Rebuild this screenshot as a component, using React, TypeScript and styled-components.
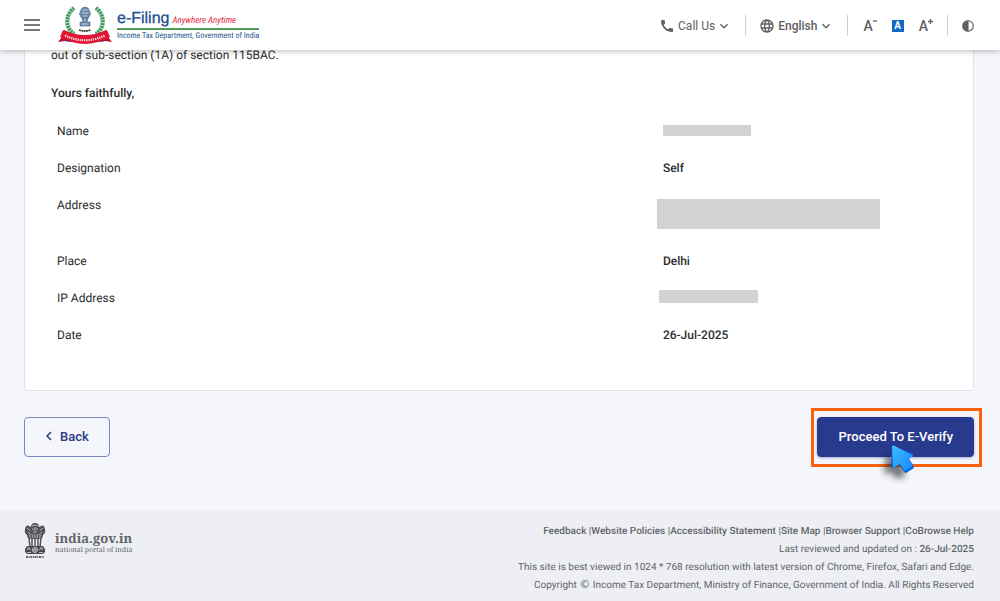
import React from "react";
import styled, { createGlobalStyle, css } from "styled-components";
import { MdCall, MdContrast, MdKeyboardArrowDown, MdKeyboardArrowLeft, MdLanguage } from "react-icons/md";

const GlobalStyle = createGlobalStyle`
  * { box-sizing: border-box; }
  body {
    margin: 0;
    background: #f4f6fb;
    color: #2b2c2e;
    font-family: Roboto, "Liberation Sans", sans-serif;
    font-size: 12px;
    text-rendering: geometricPrecision;
  }
  button { font: inherit; cursor: pointer; }
  p, dl, dd { margin: 0; }
`;

const Header = styled.header`
  position: sticky;
  top: 0;
  z-index: 2;
  display: flex;
  align-items: center;
  justify-content: space-between;
  height: 50px;
  padding: 1px 25px 0 24px;
  background: #fff;
  box-shadow: 0 2px 5px rgba(0, 0, 0, 0.22);
`;

const HeaderStart = styled.div`
  display: flex;
  align-items: center;
  gap: 17px;
`;

const IconButton = styled.button`
  display: flex;
  align-items: center;
  padding: 0;
  border: 0;
  background: none;
  color: #5f6063;
`;

const BrandLink = styled.a`
  display: flex;
  align-items: center;
  gap: 4px;
  text-decoration: none;
`;

const BrandText = styled.span`
  display: flex;
  flex-direction: column;
  font-family: "Roboto Condensed", "Liberation Sans", sans-serif;
  white-space: nowrap;
`;

const BrandTop = styled.span`
  display: flex;
  align-items: baseline;
  gap: 3px;
  height: 20px;
  border-bottom: 2px solid #4f9d5b;
  line-height: 18px;
`;

const BrandName = styled.span`
  color: #1d4f91;
  font-family: "Liberation Sans", sans-serif;
  font-size: 16px;
  -webkit-text-stroke: 0.3px #1d4f91;
`;

const BrandTagline = styled.span`
  color: #e0263c;
  font-size: 9px;
  font-style: italic;
`;

const BrandDepartment = styled.span`
  color: #23598f;
  font-size: 8px;
  line-height: 12px;
`;

const HeaderTools = styled.div`
  display: flex;
  align-items: center;
`;

const Divider = styled.span`
  width: 1px;
  height: 21px;
  margin: 0 13px;
  background: #cfcfd1;
`;

const ToolButton = styled(IconButton)<{ $strong?: boolean }>`
  gap: 3px;
  line-height: 20px;
  font-weight: ${(p) => (p.$strong ? 500 : 400)};
`;

const ToolLabel = styled.span`
  margin-right: -2px;
`;

const TextSizes = styled.div`
  display: flex;
  align-items: center;
  gap: 15px;
  padding: 0 1px 0 2px;
`;

const SizeButton = styled(IconButton)`
  align-items: flex-start;
  font-size: 14px;
  font-weight: 500;
  line-height: 16px;
  svg { margin-top: 1px; }
`;

const SizeDefault = styled(IconButton)`
  justify-content: center;
  width: 12px;
  height: 12px;
  background: #1268c4;
  color: #fff;
  font-size: 10px;
  font-weight: 700;
  line-height: 12px;
`;

const Main = styled.main`
  padding: 0 26px 53px 24px;
`;

const Card = styled.section`
  margin-top: -25px;
  padding: 23px 25px 36px 26px;
  border: 1px solid #e1e3ea;
  border-radius: 3px;
  background: #fff;
`;

const Clause = styled.p`
  line-height: 12px;
`;

const SignOff = styled.p`
  margin: 24px 0 12px;
  font-weight: 500;
  line-height: 16px;
`;

const Details = styled.dl`
  padding-left: 6px;
`;

const DetailRow = styled.div`
  display: grid;
  grid-template-columns: 68% 1fr;
  line-height: 37px;
`;

const DetailValue = styled.dd`
  font-weight: 500;
`;

const redactionSizes = {
  name: css`width: 88px; height: 11px; margin: 12px 0 14px;`,
  address: css`width: 223px; height: 30px; margin: 12px -6px 14px;`,
  ip: css`width: 99px; height: 13px; margin: 10px -4px 14px;`,
};

const Redaction = styled.span<{ $kind: keyof typeof redactionSizes }>`
  display: block;
  background: #d1d3d4;
  ${(p) => redactionSizes[p.$kind]}
`;

const Actions = styled.div`
  display: flex;
  justify-content: space-between;
  margin-top: 26px;
`;

const ActionButton = styled.button<{ $primary?: boolean }>`
  display: flex;
  align-items: center;
  height: 40px;
  gap: 2px;
  padding: ${(p) => (p.$primary ? "0 20px 2px 21px" : "0 20px 2px 15px")};
  border: 1px solid ${(p) => (p.$primary ? "#283a8e" : "#7c87bd")};
  border-radius: 4px;
  background: ${(p) => (p.$primary ? "#283a8e" : "transparent")};
  color: ${(p) => (p.$primary ? "#fff" : "#2c3a85")};
  box-shadow: ${(p) => (p.$primary ? "0 1px 3px rgba(40, 58, 142, 0.4)" : "none")};
  font-size: 13px;
  font-weight: 500;
`;

const Spotlight = styled.div`
  position: relative;
  &::after {
    content: "";
    position: absolute;
    inset: -9px -8px -10px -6px;
    border: 3px solid #f9610b;
    pointer-events: none;
  }
`;

const Pointer = styled.svg`
  position: absolute;
  top: 24px;
  left: 66px;
  z-index: 1;
  overflow: visible;
  pointer-events: none;
`;

const Footer = styled.footer`
  display: flex;
  justify-content: space-between;
  padding: 13px 26px 6px 24px;
  background: #edeff5;
  color: #626468;
  font-size: 10px;
`;

const PortalLink = styled.a`
  display: flex;
  align-self: flex-start;
  align-items: center;
  gap: 9px;
  color: #626468;
  font-family: "Noto Serif", "Liberation Serif", serif;
  text-decoration: none;
`;

const PortalText = styled.span`
  display: flex;
  flex-direction: column;
  padding-top: 3px;
  font-size: 7px;
  line-height: 10px;
`;

const PortalName = styled.strong`
  font-size: 13px;
  line-height: 16px;
`;

const FooterText = styled.div`
  text-align: right;
  line-height: 18px;
  a { color: inherit; text-decoration: none; }
`;

const FooterLinks = styled.nav`
  font-weight: 500;
`;

const Strong = styled.strong`
  font-weight: 500;
`;

const CopyrightSign = styled.span`
  font-family: "DejaVu Sans", sans-serif;
  font-size: 11px;
  line-height: 1;
`;

function Crest() {
  return (
    <svg width="56" height="40" viewBox="0 0 56 40" aria-hidden="true">
      <path d="M17 2C8 9 8 22 17 28M39 2c9 7 9 20 0 26" fill="none" stroke="#a5d2af" strokeWidth="4" />
      <path d="M17 2C8 9 8 22 17 28M39 2c9 7 9 20 0 26" fill="none" stroke="#35975a" strokeWidth="4" strokeDasharray="1.6 1.3" />
      <g fill="#6d87a8" stroke="#46658c" strokeWidth=".6">
        <path d="M23.500 5q1-4 4.500-4t4.500 4l1 3-2 4h-7l-2-4z" />
        <path d="M25 12h6l-1 4h-4z" />
        <path d="M23 16h10v4H23z" />
      </g>
      <path d="M25.500 4h5M24.500 7h7M25.500 10h5M28 12v4M24.500 18h7" stroke="#dbe4ee" strokeWidth=".8" />
      <path d="M22 24q6 2 12 0" fill="none" stroke="#333" strokeWidth="1.800" strokeDasharray="1.8 .6" />
      <path d="M1 36l4-5 2-7 9 4v8l-8-1zM55 36l-4-5-2-7-9 4v8l8-1z" fill="#c30f2b" />
      <path d="M8 35l4-3 2 4zM48 35l-4-3-2 4z" fill="#27386f" />
      <path d="M6 24Q28 34 50 24l3 7Q28 45 3 31z" fill="#e31735" />
      <path d="M8 29.500Q28 39 48 29.500" fill="none" stroke="#fff" strokeWidth="2.200" strokeDasharray="1.300 .9" opacity=".85" />
    </svg>
  );
}

function Emblem() {
  return (
    <svg width="22" height="36" viewBox="0 0 22 36" aria-hidden="true">
      <path d="M7 4Q7 0 11 0t4 4q5-4 6 2 1 4-2 6 0 4-4 4H7q-4 0-4-4-3-2-2-6 1-6 6-2z" fill="#535457" />
      <path d="M8 3q3-2 6 0M8 6h2m2 0h2M9 9h4M11 4v4M3 5q2 1 3 3M19 5q-2 1-3 3M4 9l3 3M18 9l-3 3M8 11l1 4M14 11l-1 4M11 11v5M5 12l2 3M17 12l-2 3" fill="none" stroke="#c9cad0" strokeWidth=".8" />
      <path d="M5 15l1 9M8 15v9M11 15v9M14 15v9M17 15l-1 9" stroke="#535457" strokeWidth="1.500" />
      <path d="M3 23h16l2 3v3l-2 2H3l-2-2v-3z" fill="#48494c" />
      <circle cx="11" cy="27" r="2.500" fill="none" stroke="#e0e1e6" strokeWidth=".8" />
      <path d="M11 24.500v5M8.500 27h5M3 27q2-3 4 0M15 27q2-3 4 0M3 29.500h4M15 29.500h4M3 25h3M16 25h3" fill="none" stroke="#d5d6db" strokeWidth=".8" />
      <path d="M2 34h18" stroke="#626468" strokeWidth="2" strokeDasharray="2 .7 1 .6" />
    </svg>
  );
}

const footerLinks = ["Feedback", "Website Policies", "Accessibility Statement", "Site Map", "Browser Support", "CoBrowse Help"];

type Detail = { label: string; value?: string; hidden?: keyof typeof redactionSizes };

const details: Detail[] = [
  { label: "Name", hidden: "name" },
  { label: "Designation", value: "Self" },
  { label: "Address", hidden: "address" },
  { label: "Place", value: "Delhi" },
  { label: "IP Address", hidden: "ip" },
  { label: "Date", value: "26-Jul-2025" },
];

export default function App() {
  return (
    <>
      <GlobalStyle />
      <Header>
        <HeaderStart>
          <IconButton aria-label="Menu">
            <svg width="16" height="14" viewBox="0 0 16 14" stroke="#77787a" strokeWidth="2">
              <path d="M0 1h16M0 6h16M0 11h16" />
            </svg>
          </IconButton>
          <BrandLink href="#home">
            <Crest />
            <BrandText>
              <BrandTop>
                <BrandName>e-Filing</BrandName>
                <BrandTagline>Anywhere Anytime</BrandTagline>
              </BrandTop>
              <BrandDepartment>Income Tax Department, Government of India</BrandDepartment>
            </BrandText>
          </BrandLink>
        </HeaderStart>
        <HeaderTools>
          <ToolButton>
            <MdCall size={16} />
            <ToolLabel>Call Us</ToolLabel>
            <MdKeyboardArrowDown size={16} />
          </ToolButton>
          <Divider />
          <ToolButton $strong>
            <MdLanguage size={16} />
            <ToolLabel>English</ToolLabel>
            <MdKeyboardArrowDown size={16} />
          </ToolButton>
          <Divider />
          <TextSizes>
            <SizeButton aria-label="Decrease text size">
              A
              <svg width="4" height="5" viewBox="0 0 4 5" stroke="#5f6063" strokeWidth="1.300">
                <path d="M0 2h4" />
              </svg>
            </SizeButton>
            <SizeDefault aria-label="Default text size">A</SizeDefault>
            <SizeButton aria-label="Increase text size">
              A
              <svg width="5" height="5" viewBox="0 0 5 5" stroke="#5f6063" strokeWidth="1.300">
                <path d="M0 2.500h5M2.500 0v5" />
              </svg>
            </SizeButton>
          </TextSizes>
          <Divider />
          <IconButton aria-label="Toggle contrast">
            <MdContrast size={14} />
          </IconButton>
        </HeaderTools>
      </Header>

      <Main>
        <Card>
          <Clause>out of sub-section (1A) of section 115BAC.</Clause>
          <SignOff>Yours faithfully,</SignOff>
          <Details>
            {details.map((d) => (
              <DetailRow key={d.label}>
                <dt>{d.label}</dt>
                <DetailValue>{d.hidden ? <Redaction $kind={d.hidden} /> : d.value}</DetailValue>
              </DetailRow>
            ))}
          </Details>
        </Card>
        <Actions>
          <ActionButton>
            <MdKeyboardArrowLeft size={18} />
            Back
          </ActionButton>
          <Spotlight>
            <ActionButton $primary>Proceed To E-Verify</ActionButton>
            <Pointer width="36" height="36" viewBox="0 0 36 36" aria-hidden="true">
              <defs>
                <linearGradient id="pointerFill" x1="0" y1="0" x2="1" y2="1">
                  <stop offset="0" stopColor="#3fbcff" />
                  <stop offset="1" stopColor="#1688fb" />
                </linearGradient>
                <filter id="pointerShadow" x="-50%" y="-50%" width="200%" height="200%">
                  <feGaussianBlur stdDeviation="3" />
                </filter>
              </defs>
              <path d="M3 12l20 11-3 4 3 8-10 3-5-7-7 3z" fill="#222" opacity=".6" filter="url(#pointerShadow)" />
              <path d="M9 5l-1 21 2 1 6-4 5 8 2 1 8-5-1-3-4-6 4-4-1-2z" fill="#0b62db" />
              <path d="M9 5q1-1 3 0l17 9q2 1 0 2l-4 2 5 7-8 5-5-7-5 3q-2 1-2-1L9 6z" fill="url(#pointerFill)" />
            </Pointer>
          </Spotlight>
        </Actions>
      </Main>

      <Footer>
        <PortalLink href="#india">
          <Emblem />
          <PortalText>
            <PortalName>india.gov.in</PortalName>
            national portal of india
          </PortalText>
        </PortalLink>
        <FooterText>
          <FooterLinks>
            {footerLinks.map((name, i) => (
              <React.Fragment key={name}>
                {i > 0 && " |"}
                <a href="#footer">{name}</a>
              </React.Fragment>
            ))}
          </FooterLinks>
          <p>Last reviewed and updated on : <Strong>26-Jul-2025</Strong></p>
          <p>This site is best viewed in 1024 * 768 resolution with latest version of Chrome, Firefox, Safari and Edge.</p>
          <p>Copyright <CopyrightSign>©</CopyrightSign> Income Tax Department, Ministry of Finance, Government of India. All Rights Reserved</p>
        </FooterText>
      </Footer>
    </>
  );
}
